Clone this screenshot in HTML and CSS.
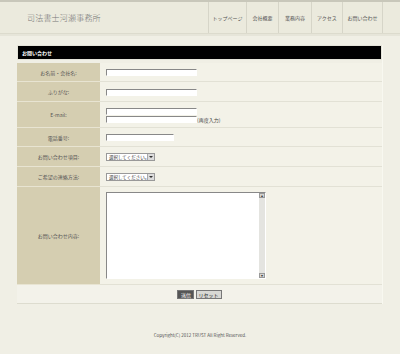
FILE: index.html
```html
<!DOCTYPE html>
<html lang="ja">
<head>
    <meta charset="UTF-8">
    <title>お問い合わせ | 司法書士河瀬事務所</title>
    <link rel="stylesheet" href="styles.css">
</head>
<body>
    <div class="header">
        <div class="header-inner">
            <div class="site-title">司法書士河瀬事務所</div>
            <ul class="nav">
                <li class="nav-top">トップページ</li>
                <li class="nav-about">会社概要</li>
                <li class="nav-work">業務内容</li>
                <li class="nav-access">アクセス</li>
                <li class="nav-contact">お問い合わせ</li>
            </ul>
        </div>
    </div>

    <div class="container">
        <h2 class="page-title">お問い合わせ</h2>

        <form class="contact-form">
            <table class="form-table">
                <tr class="row-name">
                    <th>お名前・会社名:</th>
                    <td><input type="text" class="text-long"></td>
                </tr>
                <tr class="row-kana">
                    <th>ふりがな:</th>
                    <td><input type="text" class="text-long"></td>
                </tr>
                <tr class="row-mail">
                    <th>E-mail:</th>
                    <td>
                        <input type="text" class="text-long mail-first"><br>
                        <input type="text" class="text-long"><span class="note">(再度入力)</span>
                    </td>
                </tr>
                <tr class="row-tel">
                    <th>電話番号:</th>
                    <td><input type="text" class="text-short"></td>
                </tr>
                <tr class="row-select">
                    <th>お問い合わせ項目:</th>
                    <td>
                        <span class="select">選択してください。<span class="arrow"></span></span>
                    </td>
                </tr>
                <tr class="row-select">
                    <th>ご希望の連絡方法:</th>
                    <td>
                        <span class="select">選択してください。<span class="arrow"></span></span>
                    </td>
                </tr>
                <tr class="row-body">
                    <th>お問い合わせ内容:</th>
                    <td>
                        <div class="textarea">
                            <div class="scrollbar">
                                <span class="sb-btn">▴</span>
                                <span class="sb-btn">▾</span>
                            </div>
                        </div>
                    </td>
                </tr>
                <tr class="row-submit">
                    <td colspan="2">
                        <span class="btn btn-send">送信</span>
                        <span class="btn">リセット</span>
                    </td>
                </tr>
            </table>
        </form>
    </div>

    <div class="footer">Copyright(C) 2012 TRUST All Right Reserved.</div>
</body>
</html>
```

FILE: styles.css
```css
body {
    margin: 0;
    background: #f0efe5;
    font-family: "Noto Sans CJK JP", "Noto Sans", sans-serif;
    color: #444;
    font-size: 5px;
}
.header {
    background: #ebeadd;
    border-top: 2px solid #c8c7ba;
    border-bottom: 1px solid #dcdbcd;
    height: 31px;
    box-shadow: 0 2px 0 #e6e5d9;
}
.header-inner {
    display: flex;
    justify-content: space-between;
    align-items: stretch;
    height: 31px;
    padding-left: 27px;
    padding-right: 17px;
}
.site-title {
    font-size: 8px;
    font-weight: 300;
    color: #777;
    align-self: center;
    letter-spacing: 0.2px;
}
.nav {
    display: flex;
    list-style: none;
    margin: 0;
    padding: 0;
    border-left: 1px solid #d6d5c8;
}
.nav li {
    display: flex;
    align-items: center;
    justify-content: center;
    border-right: 1px solid #d6d5c8;
    color: #555;
    font-size: 5px;
    white-space: nowrap;
}
.nav-top { width: 37px; }
.nav-about { width: 31px; }
.nav-work { width: 32px; }
.nav-access { width: 30px; }
.nav-contact { width: 39px; }

.container {
    margin: 11px 17px 0 17px;
    border-right: 1px solid #f8f8f0;
}
.page-title {
    margin: 0;
    background: #000;
    color: #fff;
    font-size: 5px;
    font-weight: bold;
    height: 13px;
    line-height: 13px;
    padding-left: 4px;
    border: 1px solid #e4e3d8;
}
.contact-form {
    margin-top: 3px;
}
.form-table {
    width: 100%;
    border-collapse: collapse;
}
.form-table th {
    width: 83px;
    background: #d5ceb1;
    font-weight: normal;
    color: #555;
    text-align: center;
    border-bottom: 1px solid #e8e4d2;
    padding: 0;
}
.form-table td {
    background: #f3f2e8;
    border-bottom: 1px solid #e2e1d5;
    padding: 0 0 0 6px;
    vertical-align: middle;
}
.row-name th, .row-name td { height: 18px; }
.row-kana th, .row-kana td { height: 19px; }
.row-mail th, .row-mail td { height: 25px; }
.row-tel th, .row-tel td { height: 18px; }
.row-select th, .row-select td { height: 19px; }
.row-body th, .row-body td { height: 97px; }

input {
    box-sizing: border-box;
    height: 7px;
    margin: 0;
    padding: 0;
    background: #fff;
    border: 1px solid #fff;
    border-top-color: #888;
    border-left-color: #888;
    vertical-align: middle;
}
.text-long { width: 91px; }
.text-short { width: 68px; }
.mail-first { margin-bottom: 0; }
.note {
    font-size: 5px;
    vertical-align: middle;
    color: #444;
}
.select {
    display: inline-flex;
    align-items: center;
    box-sizing: border-box;
    width: 49px;
    height: 8px;
    background: #fff;
    border: 1px solid #999;
    font-size: 4.5px;
    color: #333;
    padding-left: 2px;
    position: relative;
}
.arrow {
    position: absolute;
    right: 0;
    top: 0;
    width: 6px;
    height: 6px;
    background: #dcdcdc;
    border-left: 1px solid #aaa;
}
.arrow::after {
    content: "";
    position: absolute;
    left: 1px;
    top: 2px;
    border-left: 2px solid transparent;
    border-right: 2px solid transparent;
    border-top: 2px solid #333;
}
.textarea {
    box-sizing: border-box;
    width: 160px;
    height: 87px;
    background: #fff;
    border: 1px solid #fff;
    border-top-color: #888;
    border-left-color: #888;
    display: flex;
    justify-content: flex-end;
}
.scrollbar {
    width: 6px;
    background: #e4e4e0;
    display: flex;
    flex-direction: column;
    justify-content: space-between;
}
.sb-btn {
    display: block;
    height: 5px;
    background: #d4d4d0;
    border: 1px solid #999;
    box-sizing: border-box;
    font-size: 4px;
    line-height: 3px;
    text-align: center;
    color: #333;
}
.row-submit td {
    height: 18px;
    text-align: center;
    padding: 0;
    background: #f3f2ea;
    border-top: 1px solid #e2e1d5;
    border-bottom: 1px solid #dddccf;
}
.btn {
    display: inline-block;
    height: 7px;
    line-height: 7px;
    padding: 0 2px;
    background: #d8d8d4;
    border: 1px solid #777;
    font-size: 5px;
    color: #222;
    vertical-align: middle;
}
.btn-send {
    background: #555;
    color: #fff;
    width: 11px;
}
.footer {
    text-align: center;
    font-size: 4.5px;
    color: #555;
    margin-top: 28px;
}
```
